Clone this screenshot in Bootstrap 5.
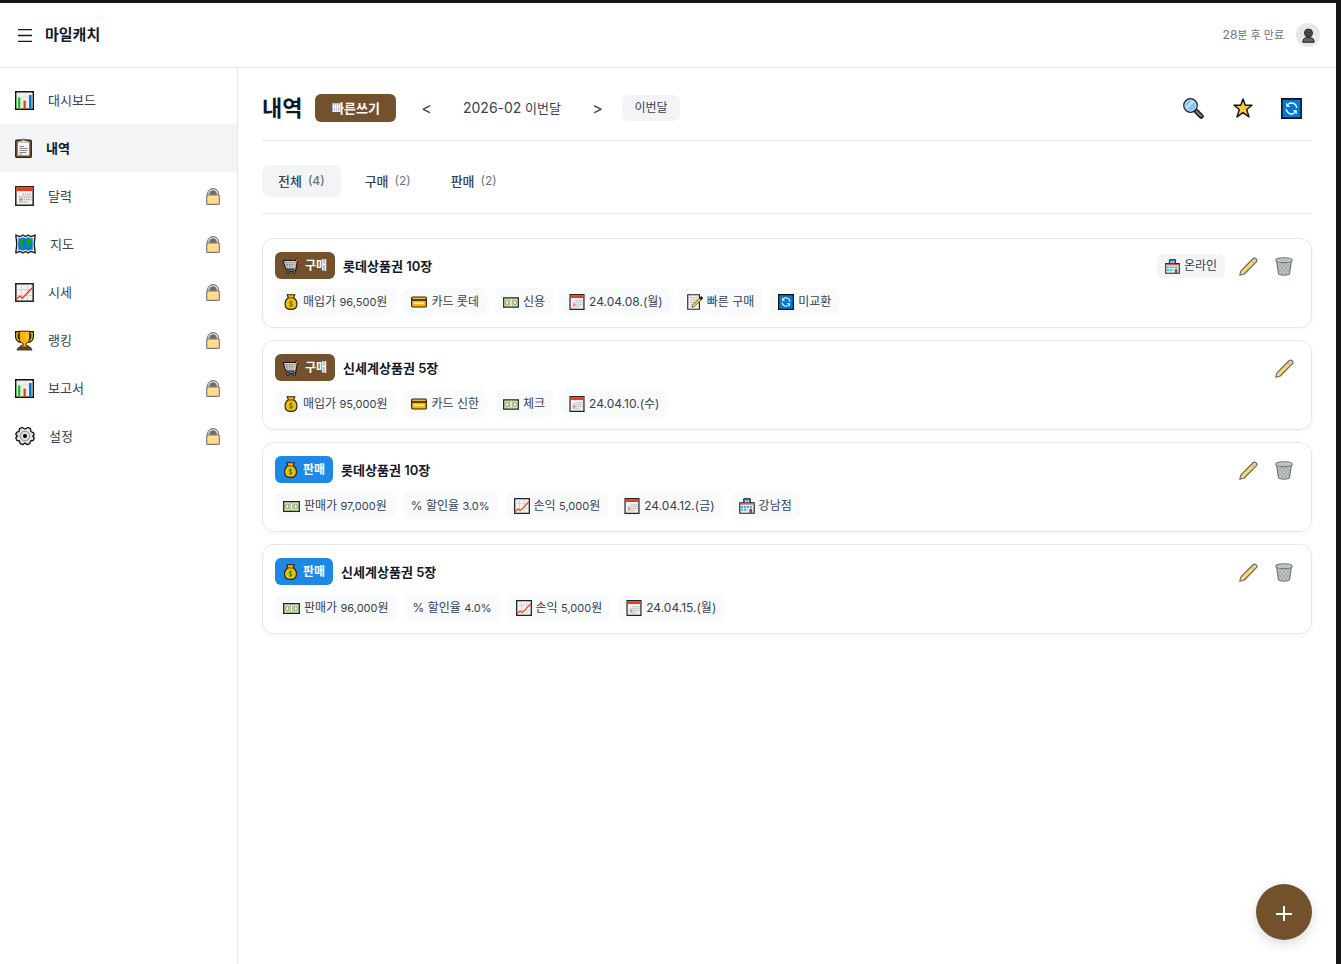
<!DOCTYPE html>
<html lang="ko">
<head>
<meta charset="utf-8">
<meta name="viewport" content="width=device-width, initial-scale=1">
<title>마일캐치 - 내역</title>
<link href="https://cdn.jsdelivr.net/npm/bootstrap@5.3.0/dist/css/bootstrap.min.css" rel="stylesheet">
<style>
:root { --ink: #111827; --body: #374151; --muted: #6b7280; --line: #e5e7eb; --soft: #f3f4f6; --brown: #74512d; --blue: #1e88e5; }
body { font-family: Inter, "Noto Sans CJK KR", sans-serif; font-size: 13px; line-height: 20px; color: var(--body); background: #fff; border-top: 3px solid #161616; border-right: 5px solid #161616; }
svg { display: block; flex: none; }
button { border: 0; background: none; padding: 0; color: inherit; }
.topbar { height: 65px; padding: 0 16px; border-bottom: 1px solid var(--line); }
.menu-btn { width: 18px; height: 24px; display: grid; place-items: center; }
.brand { font-size: 15px; font-weight: 600; color: var(--ink); margin: 0 0 0 11px; }
.session { gap: 12px; }
.expiry { font-size: 11px; color: var(--muted); }
.expiry span { font-size: 12px; }
.avatar { width: 24px; height: 24px; background: var(--line); display: grid; place-items: center; }
.side { width: 238px; padding-top: 8px; border-right: 1px solid var(--line); }
.side a { height: 48px; padding: 0 17px 0 15px; gap: 14px; color: var(--body); text-decoration: none; }
.side a.active { background: var(--soft); color: var(--ink); font-weight: 600; }
.lock { margin-left: auto; opacity: .6; }
.content { padding: 24px; }
.head-row, .tab-row { padding-bottom: 16px; margin-bottom: 24px; border-bottom: 1px solid var(--line); }
.head-row { height: 49px; }
.page-title { font-size: 22px; font-weight: 700; line-height: 32px; color: var(--ink); margin: 0 13px 0 0; }
.quick { width: 81px; height: 28px; border-radius: 6px; background: var(--brown); color: #fff; font-weight: 600; }
.step { width: 28px; height: 32px; font-size: 16px; }
.month { width: 143px; text-align: center; }
.month span { font-size: 14px; }
.this-month { height: 26px; padding: 0 12px; margin-left: 11px; border-radius: 6px; background: var(--soft); font-size: 12px; }
.tool { width: 41px; height: 32px; display: grid; place-items: center; }
.tab { height: 32px; padding: 0 16px; gap: 6px; border-radius: 8px; font-weight: 500; }
.tab.on { background: var(--soft); }
.tab small { font-size: 12px; font-weight: 400; color: var(--muted); }
.tab.on small { font-weight: 500; }
.entries { gap: 12px; }
.entry { padding: 12px; border: 1px solid var(--line); border-radius: 12px; box-shadow: 0 2px 4px rgba(0,0,0,.04); }
.entry header { height: 29px; gap: 8px; margin-bottom: 8px; }
.kind { height: 27px; padding: 1px 8px 0; gap: 5px; border-radius: 6px; color: #fff; font-size: 12px; font-weight: 600; }
.buy { background: var(--brown); }
.sell { background: var(--blue); }
.entry h2 { font-size: 13px; line-height: 20px; font-weight: 600; color: var(--ink); margin: 0; }
.tag { height: 27px; padding: 1px 8px 0; gap: 4px; border-radius: 6px; background: #f9fafb; font-size: 12px; white-space: nowrap; }
.amt { font-size: 11px; }
.place { height: 24px; margin-right: 2px; background: var(--soft); }
.acts { gap: 6px; }
.act { width: 30px; height: 29px; padding-top: 1px; display: grid; place-items: center; opacity: .7; }
.fab { position: fixed; right: 29px; bottom: 24px; width: 56px; height: 56px; background: var(--brown); color: #fff; box-shadow: 0 4px 12px rgba(0,0,0,.15); display: grid; place-items: center; }
</style>
</head>
<body class="min-vh-100 d-flex flex-column">
<svg width="0" height="0" class="position-absolute" aria-hidden="true">
  <symbol id="chart" viewBox="0 0 19 19"><path fill="#eee" stroke="#111" stroke-width="1.4" d="M.7.7h17.6v17.6H.7z"/><path stroke="#ddd" d="M2 6h15M2 12h15"/><path fill="#16c60c" d="M3 6.500h2.300V18H3z"/><path fill="#f03a17" d="M8.500 9.500h2.300V18H8.500z"/><path fill="#0078d7" d="M14 4h2.600v14H14z"/></symbol>
  <symbol id="clip" viewBox="0 0 17 20"><rect x=".8" y="2.300" width="15.400" height="17" rx="1" fill="#a87b4f" stroke="#222" stroke-width="1.500"/><path fill="#f7f7f7" d="M3 4.500h11v12.700H3z"/><path fill="#c8c8c8" d="M4.500 5V2.800h2.300L8.500 1l1.700 1.800h2.300V5z"/><path fill="none" stroke="#333" stroke-width=".9" d="M4 2.300h3L8.500.8 10 2.300h3"/><path stroke="#777" stroke-width=".9" d="M4.500 8.500h4.500M4.500 10.500h8M4.500 12.500h8M4.500 14.500h7M4.500 16h2.500"/></symbol>
  <symbol id="cal" viewBox="0 0 19 20"><path fill="#f2f2f2" stroke="#222" stroke-width="1.500" d="M.8.8h17.400v18.400H.8z"/><path fill="#f03a17" d="M1.500 1.500h16V5h-16z"/><path stroke="#aaa" stroke-width="1.300" stroke-dasharray="1.500 .8" d="M7.500 8.500h9M4 11h12.500M4 13.500h12.500M4 16h9"/><circle cx="6" cy="13.500" r="1.500" fill="#f57c66"/></symbol>
  <symbol id="map" viewBox="0 0 21 20"><path fill="#e8e8e8" stroke="#111" stroke-width="1.300" stroke-linejoin="round" d="m.8 1 4 1.700L8 1l2.500 1.500L13 1l3 1.700L20.200 1l-1 9 1 9-4.200-1.700-3 1.700-2.500-1.500L8 19l-3.200-1.700-4 1.700 1-9z"/><path fill="#0078d7" d="m3.300 4 1.700.5 3-1.300 2.500 1.300L13 3.200l3 1.300 1.700-.5v12l-1.700-.5-3 1.300-2.500-1.300L8 16.800l-3-1.300-1.700.5z"/><path fill="#16a51b" d="m4 6.500 3.500-2L9 6.500 7.500 8 7 9.500l1.500 2-1 3L6 12 5 9zm7 .5 3-2.500 3 1-.5 3-2 1.500v2.500l-1.500 1.500-1-4-1-1z"/></symbol>
  <symbol id="trend" viewBox="0 0 19 19"><path fill="#f2f2f2" stroke="#222" stroke-width="1.500" d="M.8.8h17.400v17.400H.8z"/><path stroke="#d4d4d4" d="M6.500 2v15M12.500 2v15M2 6.500h15M2 12.500h15"/><path fill="none" stroke="#f03a17" stroke-width="1.300" d="m1.500 16 3.500-3 2.500 2L17.500 4.500"/></symbol>
  <symbol id="cup" viewBox="0 0 20 21"><path fill="none" stroke="#111" stroke-width="4" d="M5 2.500H2v4C2 9 4 11 6 11M15 2.500h3v4c0 2.500-2 4.500-4 4.500"/><path fill="none" stroke="#ffb900" stroke-width="1.600" d="M5 2.500H2v4C2 9 4 11 6 11M15 2.500h3v4c0 2.500-2 4.500-4 4.500"/><path fill="#ffb900" stroke="#111" d="M4.500.7h11V8c0 3-2 5-4 5.500V16h2.500v2H6v-2h2.500v-2.500c-2-.5-4-2.500-4-5.500z"/><path fill="#7c4a24" stroke="#111" stroke-width=".8" d="M4 17.500h12l2 3H2z"/><path fill="#ffd257" d="M11.500 3H13v5l-1.500 2z"/></symbol>
  <symbol id="gear" viewBox="0 0 20 20"><path fill="#e3e3e3" stroke="#111" stroke-width="1.300" stroke-linejoin="round" d="M7 1.500 10 3l3-1.500 2.500 1.200.4 2.800 2.600 1.300.7 2.200L17.700 10l1.500 2-1 2.400-2.600.6-.8 2.600-2.600 1L10 17l-2.200 1.600-2.600-1L4.400 15l-2.600-.6-1-2.400 1.500-2L.8 8.500l.8-2.200L4 5.400l.5-2.700z"/><circle cx="10" cy="10" r="4.800" fill="#ddd" stroke="#777" stroke-width=".8"/><circle cx="10" cy="10" r="2"/></symbol>
  <symbol id="lock" viewBox="0 0 14 17"><path fill="#111" stroke="#222" d="M1.500 8V6a5.500 5.500 0 0 1 11 0v2z"/><path fill="none" stroke="#ddd" stroke-width="1.100" d="M2.700 7V6a4.300 4.300 0 0 1 8.600 0v1"/><rect x=".7" y="7" width="12.600" height="9.300" rx=".7" fill="#ffc83d" stroke="#222" stroke-width="1.200"/></symbol>
  <symbol id="person" viewBox="0 0 14 16"><path fill="#666" stroke="#111" d="M1 15.300c0-3 1-4.800 4-5h4c3 .2 4 2 4 5z"/><circle cx="7" cy="5.300" r="4.300" fill="#555" stroke="#111"/><path stroke="#222" stroke-width=".8" d="M4 4.500h6M5.500 7h3"/></symbol>
  <symbol id="glass" viewBox="0 0 21 21"><path stroke="#111" stroke-width="5" stroke-linecap="round" d="m13.500 13.500 4.700 4.700"/><path stroke="#617577" stroke-width="2.600" stroke-linecap="round" d="m13.500 13.500 4.700 4.700"/><circle cx="7.500" cy="7.500" r="6.700" fill="#83c5f5" stroke="#222" stroke-width="1.400"/><circle cx="7.500" cy="7.500" r="5.500" fill="none" stroke="#cde6fa"/><path fill="#c9e6fc" d="M3 9 9 3l2 1-7 7z"/></symbol>
  <symbol id="star" viewBox="0 0 20 20"><path fill="#ffc83d" stroke="#111" stroke-width="1.400" stroke-linejoin="round" d="m10 1 2.300 6.300H19L13.700 11.500l2.300 7.400-6-4.300-6 4.300 2.300-7.400L1 7.300h6.700z"/></symbol>
  <symbol id="sync" viewBox="0 0 20 20"><path fill="#0078d7" stroke="#111" stroke-width="1.500" d="M.8.8h18.400v18.400H.8z"/><path fill="none" stroke="#fff" stroke-width="1.300" d="M6.800 6a5 5 0 0 1 8.200 3.500M13.200 14A5 5 0 0 1 5 10.500"/><path fill="#fff" d="M5 4.500v3.800h3.800zM15 15.500v-3.800h-3.800z"/></symbol>
  <symbol id="cart" viewBox="0 0 17 16"><path fill="none" stroke="#111" stroke-width="3" stroke-linejoin="round" d="M1.500 3.500h11l-1.200 6.500H3.500zM15.500 1.500l-2 .7-1.800 10H4"/><path fill="#777" stroke="#ddd" d="M1.500 3.500h11l-1.200 6.500H3.500z"/><path fill="none" stroke="#ddd" stroke-width=".8" d="M2 5.700h10M3 8h9M5 4l.8 6M8 4v6M10.500 4l-.7 6M13.500 2.200l-1.800 10H4"/><path stroke="#f04a2a" stroke-width="1.800" d="m13.300 2.400 2.400-1"/><circle cx="5" cy="14" r="1.400" fill="#aaa" stroke="#111"/><circle cx="11.300" cy="14" r="1.400" fill="#aaa" stroke="#111"/></symbol>
  <symbol id="bag" viewBox="0 0 14 17"><path fill="#ffb900" stroke="#222" stroke-width="1.200" d="M3 .8h8L9.800 4C12 5.500 13.300 8 13.300 10.500c0 4-2.500 5.800-6.300 5.800S.7 14.500.7 10.500C.7 8 2 5.500 4.200 4z"/><path stroke="#7b5100" stroke-width="1.200" d="M3.800 4.200h6.400"/><path fill="none" stroke="#168b21" d="M8.700 8.500C7.500 7.500 5.300 7.800 5.400 9.200s3.300 1 3.300 2.400-2.500 1.500-3.500.5M7 7v6.500"/></symbol>
  <symbol id="credit" viewBox="0 0 17 12"><rect x=".7" y=".7" width="15.600" height="10.600" rx="1" fill="#ffb900" stroke="#222" stroke-width="1.200"/><path fill="#222" d="M1 3h15v1.700H1z"/><path stroke="#fff" stroke-width="1.200" d="M3 7.300h11"/></symbol>
  <symbol id="cash" viewBox="0 0 17 11"><path fill="#d4efad" stroke="#222" stroke-width="1.300" d="M.7.7h15.600v9.600H.7z"/><ellipse cx="4.300" cy="5.500" rx="1.700" ry="2.500" fill="#edf8cf" stroke="#6a8a5a" stroke-width=".8"/><ellipse cx="12.700" cy="5.500" rx="1.700" ry="2.500" fill="#edf8cf" stroke="#6a8a5a" stroke-width=".8"/><path fill="#f8faf2" stroke="#7e8f74" stroke-width=".7" d="M7.200 1.500h2.600v8H7.200z"/></symbol>
  <symbol id="memo" viewBox="0 0 17 17"><path fill="#f5f5f5" stroke="#222" stroke-width="1.200" d="M.8.8h12.400v15.400H.8z"/><path stroke="#aaa" stroke-width=".9" d="M3 4h8M3 6.500h8M3 9h6M3 11.500h4"/><path stroke="#222" stroke-width="3.200" d="m7 12.500 9.300-9.300"/><path stroke="#ffc83d" stroke-width="2.200" d="M6.500 13 14 5.500"/><path fill="#222" d="m5 14.500.8-2.300L7.300 13.700z"/></symbol>
  <symbol id="shop" viewBox="0 0 17 17"><path fill="#3978d3" stroke="#222" d="M5 .7h7V6H5z"/><path fill="#eee" stroke="#222" stroke-width="1.200" d="M.8 5h15.400v11.200H.8z"/><path fill="#e44" d="M1.500 5.500h14V7h-14z"/><path stroke="#29b6e5" stroke-width="2" stroke-dasharray="2.200 1" d="M2 9.500h13M2 12.500h7"/><path fill="#90532d" d="M11 11.500h3V16h-3z"/><path stroke="#fff" stroke-width=".8" d="M7 2v3M10 2v3M7 3.500h3"/></symbol>
  <symbol id="pencil" viewBox="0 0 19 19"><path fill="#ffc83d" stroke="#222" stroke-width="1.200" stroke-linejoin="round" d="M.8 18.200 2 13.800 14.300 1.500c1.800-1.500 4.700 1.400 3.200 3.200L5.200 17z"/><path fill="#f4a0a8" d="m13.500 3.300 1.300-1.200c1.300-1 3.100.8 2.100 2.100l-1.200 1.300z"/><path stroke="#999" stroke-width="1.100" d="m12.800 3.900 2.300 2.300"/><path fill="#dec29b" d="m1.600 17.400.8-3.100 2.300 2.300z"/></symbol>
  <symbol id="trash" viewBox="0 0 18 19"><path fill="#a8b1b4" stroke="#333" stroke-width="1.200" d="m1.700 4 1.700 12c.3 3 10.900 3 11.200 0l1.700-12z"/><path stroke="#6d787b" stroke-width=".8" d="m4 7 8 10M3.500 11l5 6M7 6l7 9M11 6l4 5M14 7 6 17M14.500 11l-5 6M11 6l-7 9M7 6l-4 5"/><ellipse cx="9" cy="3.300" rx="8.200" ry="2.500" fill="#b9c2c5" stroke="#333" stroke-width="1.100"/><ellipse cx="9" cy="3.500" rx="6.300" ry="1.300" fill="#99a4a7"/></symbol>
</svg>

<header class="topbar d-flex align-items-center">
  <button class="menu-btn" aria-label="메뉴"><svg width="14" height="13" viewBox="0 0 14 13"><path stroke="#111827" d="M0 .5h14M0 6.500h14M0 12.500h14" stroke-width="1.400"/></svg></button>
  <p class="brand">마일캐치</p>
  <div class="session ms-auto d-flex align-items-center">
    <div class="expiry"><span>28</span>분 후 만료</div>
    <button class="avatar rounded-circle" aria-label="내 계정"><svg width="13" height="15"><use href="#person"/></svg></button>
  </div>
</header>

<div class="d-flex flex-grow-1">
  <nav class="side flex-shrink-0" aria-label="주 메뉴">
    <a href="#" class="d-flex align-items-center"><svg width="19" height="19"><use href="#chart"/></svg>대시보드</a>
    <a href="#" class="d-flex align-items-center active" aria-current="page"><svg width="17" height="20"><use href="#clip"/></svg>내역</a>
    <a href="#" class="d-flex align-items-center"><svg width="19" height="20"><use href="#cal"/></svg>달력<svg class="lock" width="14" height="17"><use href="#lock"/></svg></a>
    <a href="#" class="d-flex align-items-center"><svg width="21" height="20"><use href="#map"/></svg>지도<svg class="lock" width="14" height="17"><use href="#lock"/></svg></a>
    <a href="#" class="d-flex align-items-center"><svg width="19" height="19"><use href="#trend"/></svg>시세<svg class="lock" width="14" height="17"><use href="#lock"/></svg></a>
    <a href="#" class="d-flex align-items-center"><svg width="19" height="21"><use href="#cup"/></svg>랭킹<svg class="lock" width="14" height="17"><use href="#lock"/></svg></a>
    <a href="#" class="d-flex align-items-center"><svg width="19" height="19"><use href="#chart"/></svg>보고서<svg class="lock" width="14" height="17"><use href="#lock"/></svg></a>
    <a href="#" class="d-flex align-items-center"><svg width="20" height="20"><use href="#gear"/></svg>설정<svg class="lock" width="14" height="17"><use href="#lock"/></svg></a>
  </nav>

  <main class="content flex-grow-1">
    <div class="head-row d-flex align-items-center">
      <h1 class="page-title">내역</h1>
      <button class="quick">빠른쓰기</button>
      <button class="step ms-3" aria-label="이전 달">&lt;</button>
      <div class="month"><span>2026-02</span> 이번달</div>
      <button class="step" aria-label="다음 달">&gt;</button>
      <button class="this-month">이번달</button>
      <div class="ms-auto d-flex gap-2">
        <button class="tool" aria-label="검색"><svg width="21" height="21"><use href="#glass"/></svg></button>
        <button class="tool" aria-label="즐겨찾기"><svg width="20" height="20"><use href="#star"/></svg></button>
        <button class="tool" aria-label="새로고침"><svg width="21" height="21"><use href="#sync"/></svg></button>
      </div>
    </div>

    <div class="tab-row d-flex gap-2">
      <button class="tab on d-flex align-items-center">전체 <small>(4)</small></button>
      <button class="tab d-flex align-items-center">구매 <small>(2)</small></button>
      <button class="tab d-flex align-items-center">판매 <small>(2)</small></button>
    </div>

    <div class="entries d-grid">
      <article class="entry">
        <header class="d-flex align-items-center">
          <span class="kind buy d-flex align-items-center"><svg width="17" height="16"><use href="#cart"/></svg>구매</span>
          <h2>롯데상품권 10장</h2>
          <div class="acts ms-auto d-flex align-items-center">
            <span class="tag place d-flex align-items-center"><svg width="15" height="15"><use href="#shop"/></svg>온라인</span>
            <button class="act" aria-label="수정"><svg width="19" height="19"><use href="#pencil"/></svg></button>
            <button class="act" aria-label="삭제"><svg width="18" height="19"><use href="#trash"/></svg></button>
          </div>
        </header>
        <div class="d-flex flex-wrap gap-2">
          <div class="tag d-flex align-items-center"><svg width="16" height="16"><use href="#bag"/></svg><div>매입가 <span class="amt">96,500</span>원</div></div>
          <div class="tag d-flex align-items-center"><svg width="16" height="12"><use href="#credit"/></svg>카드 롯데</div>
          <div class="tag d-flex align-items-center"><svg width="16" height="11"><use href="#cash"/></svg>신용</div>
          <div class="tag d-flex align-items-center"><svg width="16" height="16"><use href="#cal"/></svg>24.04.08.(월)</div>
          <div class="tag d-flex align-items-center"><svg width="16" height="16"><use href="#memo"/></svg>빠른 구매</div>
          <div class="tag d-flex align-items-center"><svg width="16" height="16"><use href="#sync"/></svg>미교환</div>
        </div>
      </article>

      <article class="entry">
        <header class="d-flex align-items-center">
          <span class="kind buy d-flex align-items-center"><svg width="17" height="16"><use href="#cart"/></svg>구매</span>
          <h2>신세계상품권 5장</h2>
          <div class="acts ms-auto d-flex align-items-center">
            <button class="act" aria-label="수정"><svg width="19" height="19"><use href="#pencil"/></svg></button>
          </div>
        </header>
        <div class="d-flex flex-wrap gap-2">
          <div class="tag d-flex align-items-center"><svg width="16" height="16"><use href="#bag"/></svg><div>매입가 <span class="amt">95,000</span>원</div></div>
          <div class="tag d-flex align-items-center"><svg width="16" height="12"><use href="#credit"/></svg>카드 신한</div>
          <div class="tag d-flex align-items-center"><svg width="16" height="11"><use href="#cash"/></svg>체크</div>
          <div class="tag d-flex align-items-center"><svg width="16" height="16"><use href="#cal"/></svg>24.04.10.(수)</div>
        </div>
      </article>

      <article class="entry">
        <header class="d-flex align-items-center">
          <span class="kind sell d-flex align-items-center"><svg width="15" height="16"><use href="#bag"/></svg>판매</span>
          <h2>롯데상품권 10장</h2>
          <div class="acts ms-auto d-flex align-items-center">
            <button class="act" aria-label="수정"><svg width="19" height="19"><use href="#pencil"/></svg></button>
            <button class="act" aria-label="삭제"><svg width="18" height="19"><use href="#trash"/></svg></button>
          </div>
        </header>
        <div class="d-flex flex-wrap gap-2">
          <div class="tag d-flex align-items-center"><svg width="17" height="11"><use href="#cash"/></svg><div>판매가 <span class="amt">97,000</span>원</div></div>
          <div class="tag d-flex align-items-center"><div>% 할인율 <span class="amt">3.0%</span></div></div>
          <div class="tag d-flex align-items-center"><svg width="16" height="16"><use href="#trend"/></svg><div>손익 <span class="amt">5,000</span>원</div></div>
          <div class="tag d-flex align-items-center"><svg width="16" height="16"><use href="#cal"/></svg>24.04.12.(금)</div>
          <div class="tag d-flex align-items-center"><svg width="16" height="16"><use href="#shop"/></svg>강남점</div>
        </div>
      </article>

      <article class="entry">
        <header class="d-flex align-items-center">
          <span class="kind sell d-flex align-items-center"><svg width="15" height="16"><use href="#bag"/></svg>판매</span>
          <h2>신세계상품권 5장</h2>
          <div class="acts ms-auto d-flex align-items-center">
            <button class="act" aria-label="수정"><svg width="19" height="19"><use href="#pencil"/></svg></button>
            <button class="act" aria-label="삭제"><svg width="18" height="19"><use href="#trash"/></svg></button>
          </div>
        </header>
        <div class="d-flex flex-wrap gap-2">
          <div class="tag d-flex align-items-center"><svg width="17" height="11"><use href="#cash"/></svg><div>판매가 <span class="amt">96,000</span>원</div></div>
          <div class="tag d-flex align-items-center"><div>% 할인율 <span class="amt">4.0%</span></div></div>
          <div class="tag d-flex align-items-center"><svg width="16" height="16"><use href="#trend"/></svg><div>손익 <span class="amt">5,000</span>원</div></div>
          <div class="tag d-flex align-items-center"><svg width="16" height="16"><use href="#cal"/></svg>24.04.15.(월)</div>
        </div>
      </article>
    </div>
  </main>
</div>

<button class="fab rounded-circle" aria-label="내역 추가"><svg width="16" height="20" viewBox="0 0 16 20"><path stroke="#fff" stroke-width="2" d="M8 4v15M0 12h16"/></svg></button>
<script src="https://cdn.jsdelivr.net/npm/bootstrap@5.3.0/dist/js/bootstrap.bundle.min.js"></script>
</body>
</html>
